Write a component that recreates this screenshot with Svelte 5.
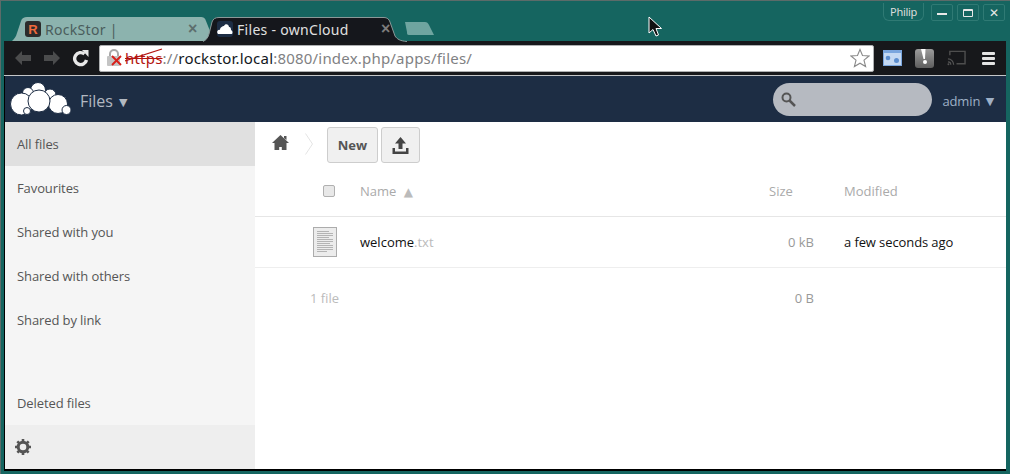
<script>
  const nav = ['All files', 'Favourites', 'Shared with you', 'Shared with others', 'Shared by link'];
</script>

<div class="window">
  <div class="titlebar">
    <div class="tabs">
      <div class="tab inactive">
        <svg class="tabshape" width="198" height="24" viewBox="0 0 198 24"><path d="M0 24 C2 22 4 20 5 16 L9 4 C10 1 12 0 15 0 L188 0 C192 0 193 1 194 4 L198 14 L198 24 Z" fill="#8cb3ae"/></svg>
        <span class="fav rock">R</span>
        <span class="tabtitle dark">RockStor |</span>
        <span class="close dim">×</span>
      </div>
      <div class="tab active">
        <svg class="tabshape" width="204" height="25" viewBox="0 0 204 25"><path d="M0 25 C3 23 5 21 6 17 L9 5 C10 2 12 0.500 16 0.500 L181 0.500 C184 0.500 186 2 187 5 L192 19 C194 22 197 24 204 25 Z" fill="#15171c"/><path d="M0 24.500 C3 23 5 21 6 17 L9 5 C10 2 12 0.500 16 0.500 L181 0.500 C184 0.500 186 2 187 5 L192 19 C194 22 197 24 204 24.500" fill="none" stroke="#8b9898" stroke-width="1"/></svg>
        <span class="fav cloudfav"><svg width="16" height="12" viewBox="0 0 16 12"><path d="M1 11 C-1 9 1 6 3 7 C3 4 6 3 7 3 C8 0 12 1 12 4 C14 4 14 6 14 7 C16 8 16 11 14 11 Z" fill="#fff"/></svg></span>
        <span class="tabtitle light">Files - ownCloud</span>
        <span class="close grey">×</span>
      </div>
      <svg class="newtab" width="31" height="15" viewBox="0 0 31 15"><path d="M1 1 L21 1 C23 1 24 2 25 4 L30 14 L5 14 C3 14 3 13 3 11 Z" fill="#6fa5a0"/></svg>
    </div>
    <div class="controls">
      <span class="user">Philip</span>
      <span class="winbtn"><i class="min"></i></span>
      <span class="winbtn"><i class="max"></i></span>
      <span class="winbtn x">✕</span>
    </div>
  </div>

  <div class="browser">
    <div class="toolbar">
      <svg class="navicon" width="18" height="16" viewBox="0 0 18 16"><path d="M1 8 L8 1 L8 5 L17 5 L17 11 L8 11 L8 15 Z" fill="#4b4c4d"/></svg>
      <svg class="navicon" width="18" height="16" viewBox="0 0 18 16"><path d="M17 8 L10 1 L10 5 L1 5 L1 11 L10 11 L10 15 Z" fill="#4b4c4d"/></svg>
      <svg class="navicon reload" width="18" height="18" viewBox="0 0 18 18"><path d="M14.500 11 A6 6 0 1 1 12.500 5" fill="none" stroke="#e8e8e8" stroke-width="3.400"/><path d="M10 1 L16.500 1 L16.500 8 Z" fill="#e8e8e8"/></svg>
      <div class="omnibox">
        <span class="lock">
          <svg width="18" height="20" viewBox="0 0 18 20"><path d="M4 9 V6 A4 4 0 0 1 12 6 V9" fill="none" stroke="#a8a8a8" stroke-width="2"/><rect x="1" y="8" width="13" height="10" rx="1" fill="#c4c4c4"/><path d="M6 8 L15 17 M15 8 L6 17" stroke="#d8201a" stroke-width="1.900"/></svg>
        </span>
        <span class="url"><span class="https">https<svg class="strike" width="38" height="14" viewBox="0 0 38 14"><path d="M0 13 L37 1" stroke="#b3140f" stroke-width="1.300"/></svg></span><span class="g">://</span><span class="host">rockstor.local</span><span class="g">:8080/index.php/apps/files/</span></span>
        <svg class="star" width="20" height="20" viewBox="0 0 20 20"><path d="M10 1.500 L12.500 7.500 L19 8 L14 12.200 L15.600 18.500 L10 15.200 L4.400 18.500 L6 12.200 L1 8 L7.500 7.500 Z" fill="#fff" stroke="#8a8a8a" stroke-width="1.100"/></svg>
      </div>
      <div class="exts">
        <svg width="19" height="16" viewBox="0 0 19 16"><rect width="19" height="16" fill="#c4d9f3"/><rect width="19" height="3" fill="#7aa6de"/><rect x="0.500" y="0.500" width="18" height="15" fill="none" stroke="#7aa6de"/><circle cx="5" cy="8" r="2.300" fill="#5c8ecf"/><circle cx="13.500" cy="10.500" r="2.500" fill="#5c8ecf"/></svg>
        <svg width="19" height="19" viewBox="0 0 19 19"><defs><linearGradient id="g1" x1="0" y1="0" x2="0" y2="1"><stop offset="0" stop-color="#9c9c9c"/><stop offset="1" stop-color="#5e5e5e"/></linearGradient></defs><rect width="19" height="19" rx="3" fill="url(#g1)"/><path d="M6 0 L10.500 0 L10 10 L8.500 10 Z" fill="#fff"/><circle cx="10" cy="13" r="2" fill="#fff"/></svg>
        <svg width="19" height="16" viewBox="0 0 20 16"><path d="M3 5 V1 H19 V14 H10" fill="none" stroke="#4e4e4e" stroke-width="1.500"/><path d="M1 9 A6 6 0 0 1 7 15 M1 12 A3 3 0 0 1 4 15" fill="none" stroke="#555" stroke-width="1.300"/><circle cx="1.500" cy="14.500" r="1" fill="#555"/></svg>
        <span class="menu"><i></i><i></i><i></i></span>
      </div>
    </div>

    <div class="page">
      <header class="ochead">
        <div class="hleft">
          <svg class="logo" width="61" height="35" viewBox="0 0 61 35">
            <g fill="#fff" stroke="#1d2d44" stroke-width="1">
              <circle cx="28" cy="8" r="7.500"/>
              <circle cx="18" cy="11" r="5.500"/>
              <circle cx="40" cy="13" r="6"/>
              <circle cx="11.500" cy="22" r="11"/>
              <circle cx="48" cy="22" r="9.500"/>
              <circle cx="56.500" cy="28" r="4.500"/>
              <circle cx="17" cy="29" r="3.500"/>
              <circle cx="29" cy="19" r="11"/>
            </g>
          </svg>
          <span class="apptitle">Files <span class="caret">▼</span></span>
        </div>
        <div class="hright">
          <div class="search">
            <svg width="15" height="15" viewBox="0 0 15 15"><circle cx="5.500" cy="5.500" r="4" fill="none" stroke="#555" stroke-width="2"/><path d="M8.500 8.500 L14 14" stroke="#555" stroke-width="2.500"/></svg>
          </div>
          <span class="admin">admin <span class="caret">▼</span></span>
        </div>
      </header>

      <div class="main">
        <aside class="sidebar">
          <nav class="nav">
            {#each nav as item, i}
              <div class="navitem" class:sel={i === 0}>{item}</div>
            {/each}
          </nav>
          <div class="deleted">Deleted files</div>
          <div class="settings">
            <svg width="16" height="16" viewBox="0 0 16 16"><circle cx="8" cy="8" r="4.800" fill="none" stroke="#555" stroke-width="3"/><path d="M8 0 V16 M0 8 H16 M2.300 2.300 L13.700 13.700 M13.700 2.300 L2.300 13.700" stroke="#555" stroke-width="2.600" stroke-dasharray="2.600 10.800 2.600"/></svg>
          </div>
        </aside>

        <section class="content">
          <div class="controlsbar">
            <svg class="home" width="17" height="15" viewBox="0 0 17 15"><path d="M8.500 0 L17 8 L14.500 8 L14.500 15 L9.800 15 L9.800 12 L7.200 12 L7.200 15 L2.500 15 L2.500 8 L0 8 Z M12 1 H14.500 V5 L12 3 Z" fill="#555"/></svg>
            <svg class="crumb" width="8" height="22" viewBox="0 0 8 22"><path d="M0.500 0.500 L7.500 11 L0.500 21.500" fill="none" stroke="#e4e4e4" stroke-width="1"/></svg>
            <button class="btn new">New</button>
            <button class="btn upload">
              <svg width="17" height="17" viewBox="0 0 17 17"><path d="M8.500 0 L14 6.500 L10.500 6.500 L10.500 12 L6.500 12 L6.500 6.500 L3 6.500 Z M0.500 11 H3 V14.500 H14 V11 H16.500 V17 H0.500 Z" fill="#444"/></svg>
            </button>
          </div>

          <div class="row head">
            <div class="c-check"><span class="checkbox"></span></div>
            <div class="c-name">Name <span class="sort">▲</span></div>
            <div class="c-size">Size</div>
            <div class="c-mod">Modified</div>
          </div>

          <div class="row file">
            <div class="c-icon">
              <svg width="24" height="30" viewBox="0 0 24 30">
                <rect x="0.500" y="0.500" width="23" height="29" fill="#ececec" stroke="#acacac"/>
                <path d="M4 4.500 H16 M4 6.500 H20 M4 8.500 H20 M4 10.500 H16 M4 12.500 H20 M4 14.500 H20 M4 16.500 H17 M4 18.500 H20 M4 20.500 H20 M4 22.500 H20 M4 24.500 H14" stroke="#b4b4b4" stroke-width="1"/>
              </svg>
            </div>
            <div class="c-name2"><span class="base">welcome</span><span class="ext">.txt</span></div>
            <div class="c-size val">0 kB</div>
            <div class="c-mod val2">a few seconds ago</div>
          </div>

          <div class="row summary">
            <div class="c-count">1 file</div>
            <div class="c-spacer"></div>
            <div class="c-size val">0 B</div>
            <div class="c-mod"></div>
          </div>
        </section>
      </div>
    </div>
  </div>

  <svg class="cursor" width="16" height="22" viewBox="0 0 16 22"><path d="M1 1 L1 17 L5 13.500 L8 20 L10.500 19 L8 12.500 L13.500 12.500 Z" fill="#111" stroke="#fff" stroke-width="1"/></svg>
</div>

<style>
  :global(body) { margin: 0; }
  .window {
    position: relative;
    width: 1010px;
    height: 474px;
    box-sizing: border-box;
    background: #156560;
    border-top: 1px solid #5c6b69;
    border-left: 1px solid #5c6b69;
    display: flex;
    flex-direction: column;
    overflow: hidden;
    font-family: "Open Sans", sans-serif;
  }
  .titlebar {
    height: 40px;
    flex: none;
    display: flex;
    justify-content: space-between;
    align-items: flex-start;
  }
  .tabs {
    display: flex;
    align-items: flex-end;
    height: 40px;
    margin-left: 11px;
  }
  .tab {
    position: relative;
    display: flex;
    align-items: center;
    height: 24px;
    box-sizing: border-box;
  }
  .tabshape { position: absolute; left: 0; top: 0; }
  .tab > span { position: relative; }
  .tab.inactive { width: 191px; padding-left: 13px; }
  .tab.active { width: 204px; padding-left: 14px; }
  .fav {
    width: 16px; height: 16px; border-radius: 3px;
    display: flex; align-items: center; justify-content: center;
    flex: none;
  }
  .rock {
    background: #2b2b2b; color: #ef6a3c;
    font: bold 13px "Liberation Sans", sans-serif;
  }
  .cloudfav { background: #1d2d44; }
  .tabtitle {
    margin-left: 4px;
    font-family: "Noto Sans", sans-serif;
    font-size: 14px;
    letter-spacing: 0.3px;
    white-space: nowrap;
    flex: 1;
  }
  .dark { color: #4a5d5c; }
  .light { color: #e0e0e0; }
  .close {
    font: bold 16px "Liberation Sans", sans-serif;
    line-height: 16px;
    width: 10px;
  }
  .dim { color: #5d6e6d; margin-right: 5px; }
  .grey { color: #7d7d7d; margin-right: 16px; }
  .newtab { margin-left: -3px; margin-bottom: 5px; }

  .controls {
    display: flex;
    align-items: flex-start;
    gap: 4px;
    margin-right: 5px;
    margin-top: 2px;
  }
  .user {
    width: 39px; height: 17px;
    text-align: center;
    color: #ddd;
    font: 11px/17px "Noto Sans", sans-serif;
    letter-spacing: -0.3px;
    border: 1px solid #2f7a74;
    border-top: none;
    border-radius: 0 0 6px 6px;
    margin-right: 3px;
  }
  .winbtn {
    width: 20px; height: 15px;
    border: 1px solid #2f7a74;
    border-radius: 2px;
    display: flex; align-items: center; justify-content: center;
    color: #e8e8e8; font: 12px "DejaVu Sans", sans-serif;
    margin-top: 1px;
  }
  .min { width: 10px; height: 2px; background: #e8e8e8; margin-top: 3px; }
  .max { width: 8px; height: 5px; border: 1px solid #e8e8e8; border-top-width: 2px; border-radius: 1px; }

  .browser {
    margin: 0 4px 3px 3px;
    flex: 1;
    display: flex;
    flex-direction: column;
    background: #000;
    padding: 0 0 2px 0;
    min-height: 0;
  }
  .toolbar {
    height: 35px;
    flex: none;
    background: #17181b;
    display: flex;
    align-items: center;
    box-sizing: border-box;
    padding-left: 10px;
    border-bottom: 1px solid #c4c6c8;
  }
  .navicon { margin-right: 11px; flex: none; }
  .reload { margin-right: 9px; }
  .omnibox {
    width: 775px; height: 27px;
    box-sizing: border-box;
    background: #fff;
    border: 1px solid #aeb0b2;
    border-radius: 2px;
    display: flex;
    align-items: center;
    padding-left: 6px;
    padding-right: 3px;
    flex: none;
  }
  .lock { width: 18px; height: 20px; flex: none; }
  .url {
    flex: 1;
    margin-left: 1px;
    font-family: "Noto Sans", sans-serif;
    font-size: 15px;
    letter-spacing: 0.2px;
    white-space: nowrap;
  }
  .https { position: relative; color: #b3140f; text-decoration: line-through; text-decoration-thickness: 1px; }
  .strike { position: absolute; left: 0; top: 0; }
  .g { color: #7f8183; }
  .host { color: #12171c; }
  .star { flex: none; }
  .exts {
    display: flex;
    align-items: center;
    gap: 13px;
    margin-left: 9px;
  }
  .menu { display: flex; flex-direction: column; gap: 2px; width: 13px; margin-left: 3px; }
  .menu i { height: 3px; background: #e4e4e4; border-radius: 1px; }

  .page { flex: 1; display: flex; flex-direction: column; background: #fff; min-height: 0; margin-left: 1px;}
  .ochead {
    height: 46px; flex: none;
    background: #1d2d44;
    display: flex;
    justify-content: space-between;
    align-items: center;
  }
  .hleft { display: flex; align-items: center; }
  .logo { margin-left: 5px; }
  .apptitle {
    margin-left: 9px;
    margin-top: 3px;
    color: #b2b8c1;
    font-size: 16px;
    white-space: nowrap;
  }
  .caret { font-size: 11px; font-family: "DejaVu Sans", sans-serif; position: relative; top: -1px; margin-left: 2px; }
  .hright { display: flex; align-items: center; margin-right: 12px; }
  .search {
    width: 159px; height: 33px;
    background: #b6bac1;
    border-radius: 17px;
    display: flex; align-items: center;
    padding-left: 8px;
    box-sizing: border-box;
  }
  .admin { margin-left: 10px; margin-top: 3px; color: #9eb0c6; font-size: 13px; white-space: nowrap; letter-spacing: -0.1px; }

  .main { flex: 1; display: flex; min-height: 0; }
  .sidebar {
    width: 250px; flex: none;
    background: #f5f5f5;
    display: flex; flex-direction: column;
    color: #555;
    font-size: 13px;
    letter-spacing: -0.1px;
  }
  .nav { flex: 1; }
  .navitem { height: 44px; line-height: 44px; padding-left: 12px; }
  .navitem.sel { background: #e0e0e0; }
  .deleted { height: 44px; line-height: 44px; padding-left: 12px; }
  .settings {
    height: 44px;
    background: #eee;
    display: flex; align-items: center;
    padding-left: 10px;
  }

  .content { flex: 1; min-width: 0; font-size: 13px; }
  .controlsbar {
    height: 44px;
    display: flex;
    align-items: center;
    padding-left: 17px;
    box-sizing: border-box;
  }
  .home { margin-bottom: 3px; flex: none; }
  .crumb { margin-left: 16px; flex: none; }
  .btn {
    height: 36px;
    margin-top: 2px;
    box-sizing: border-box;
    background: #f0f0f0;
    border: 1px solid #cdcdcd;
    border-radius: 3px;
    color: #555;
    font: bold 13px "Open Sans", sans-serif;
    padding: 0;
    display: flex; align-items: center; justify-content: center;
  }
  .new { width: 51px; margin-left: 14px; }
  .upload { width: 39px; margin-left: 3px; }

  .row { display: flex; align-items: center; border-bottom: 1px solid #e6e6e6; }
  .head { height: 50px; color: #aaa; }
  .file { height: 50px; border-bottom-color: #eee; }
  .summary { height: 60px; border-bottom: none; color: #bbb; }
  .c-check { width: 105px; display: flex; justify-content: flex-end; padding-right: 25px; box-sizing: border-box; flex: none; }
  .checkbox { width: 10px; height: 10px; background: #e8e8e8; border: 1px solid #b0b0b0; border-radius: 2px; }
  .c-name { flex: 1; }
  .sort { font-size: 12px; margin-left: 4px; font-family: "DejaVu Sans", sans-serif; color: #bbb; }
  .c-size { width: 38px; flex: none; text-align: right; }
  .head .c-size { text-align: left; width: 75px; }
  .c-mod { width: 162px; flex: none; }
  .c-icon { width: 105px; flex: none; padding-left: 58px; box-sizing: border-box; display: flex; }
  .c-name2 { flex: 1; }
  .base { color: #111; }
  .ext { color: #bbb; }
  .val { color: #999; width: 75px; padding-right: 30px; box-sizing: border-box; }
  .val2 { color: #111; letter-spacing: -0.1px; }
  .c-count { width: 105px; flex: none; padding-left: 55px; box-sizing: border-box; }
  .c-spacer { flex: 1; }

  .cursor { position: absolute; left: 647px; top: 15px; }
</style>
